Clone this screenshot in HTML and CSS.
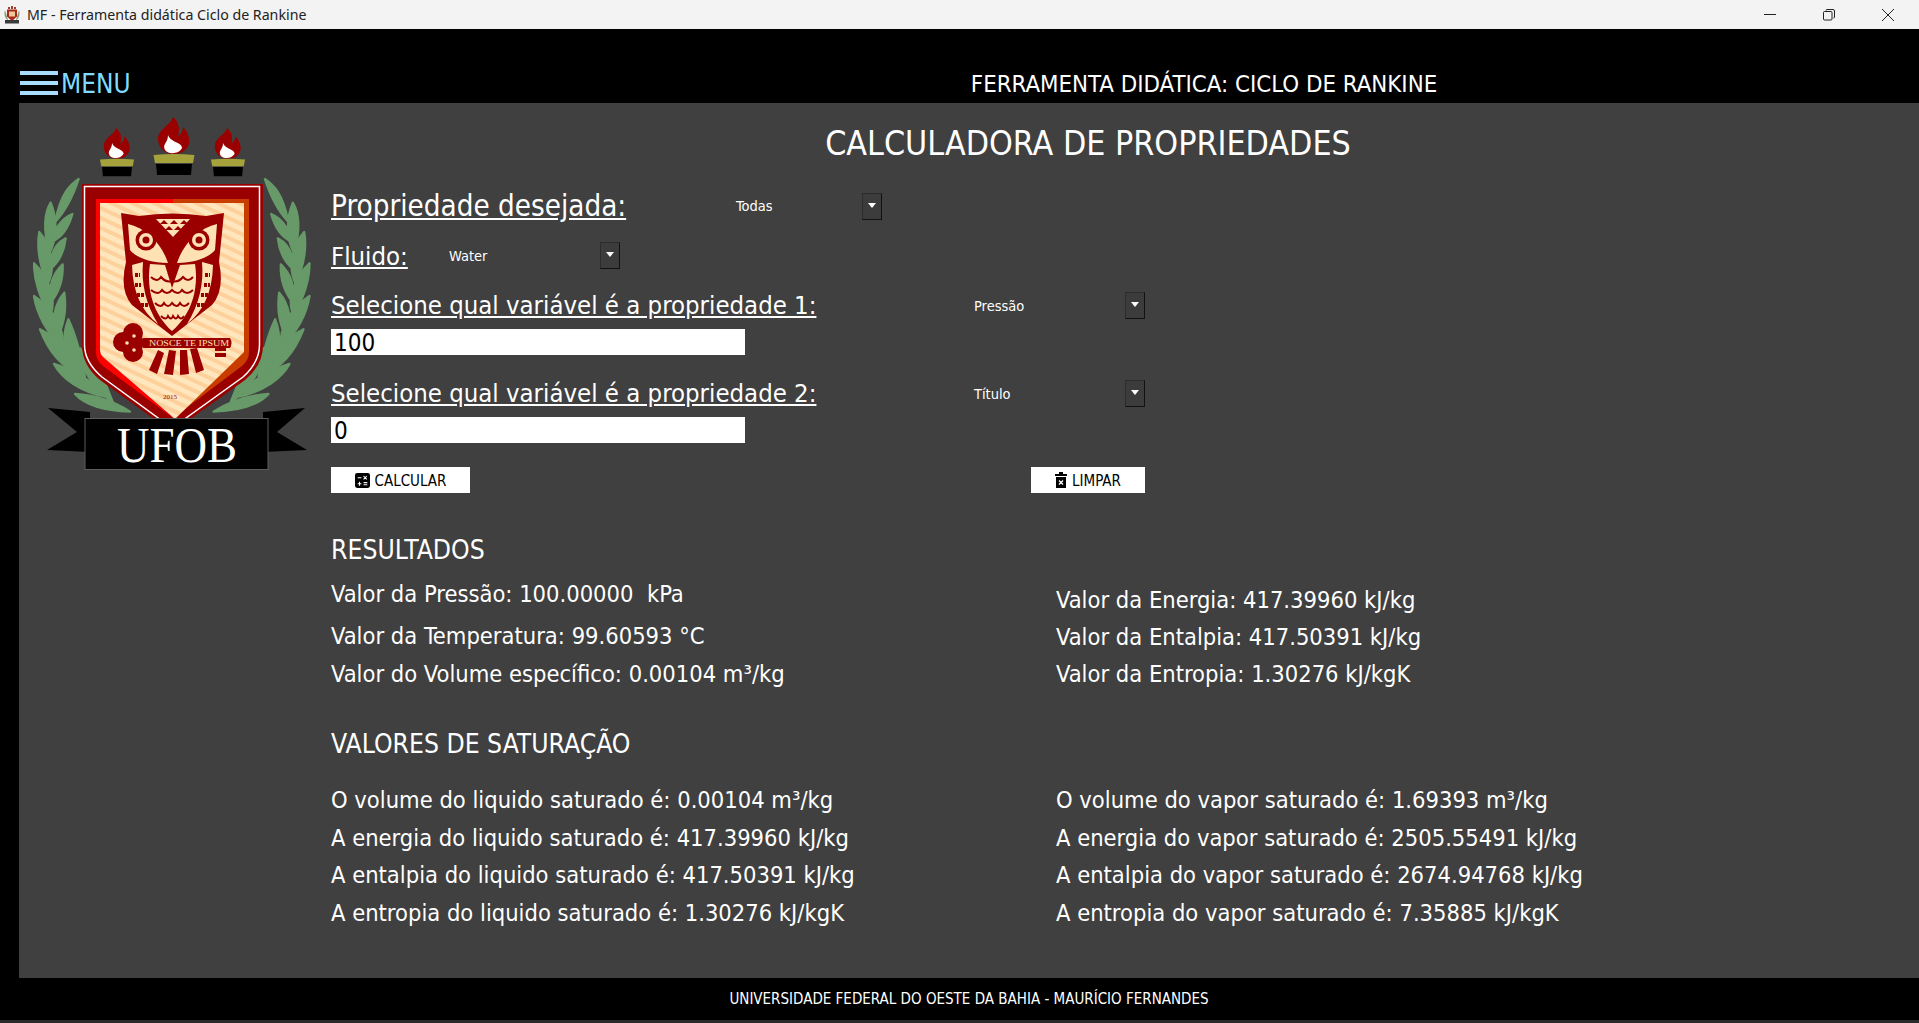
FILE: index.html
```html
<!DOCTYPE html>
<html lang="pt-BR">
<head>
    <meta charset="UTF-8">
    <title>MF - Ferramenta didática Ciclo de Rankine</title>
    <link rel="stylesheet" href="styles.css">
</head>
<body>
    <div class="titlebar">
        <svg class="app-icon" viewBox="0 0 18 18">
            <path d="M2 4Q0 10 5 15H13Q18 10 16 4L13 14H5Z" fill="#8a9a78"/>
            <path d="M4 3.500h10v7l-5 4.500-5-4.500z" fill="#a82818"/>
            <rect x="6" y="5.500" width="6" height="5" fill="#eec79a"/>
            <path d="M5 1h2v2H5zM8 0h2v3H8zM11 1h2v2h-2z" fill="#a04030"/>
            <rect x="2" y="14" width="14" height="3.500" fill="#3a3a3a"/>
        </svg>
        <span class="app-title">MF - Ferramenta didática Ciclo de Rankine</span>
        <div class="win-controls">
            <svg viewBox="0 0 12 12"><path d="M0 5.500h12" stroke="#222" fill="none"/></svg>
            <svg viewBox="0 0 12 12"><path d="M.5 3.500q0-1 1-1h6.500q1 0 1 1v6.500q0 1-1 1h-6.500q-1 0-1-1zM3 1.500q0-1 1-1h6q1.500 0 1.500 1.500v6q0 1-1 1" stroke="#222" fill="none"/></svg>
            <svg viewBox="0 0 12 12"><path d="M0 0l12 12M12 0l-12 12" stroke="#222" fill="none"/></svg>
        </div>
    </div>

    <header class="topbar">
        <div class="menu">
            <div class="burger"><i></i><i></i><i></i></div>
            <span>MENU</span>
        </div>
        <div class="app-heading">FERRAMENTA DIDÁTICA: CICLO DE RANKINE</div>
    </header>

    <div class="panel">
        <aside class="sidebar">
            <svg class="logo" viewBox="33 115 280 360">
                <defs>
                    <pattern id="stripes" width="9" height="9" patternUnits="userSpaceOnUse" patternTransform="rotate(25)">
                        <rect width="9" height="9" fill="#ffe6bd"/>
                        <rect width="9" height="4" fill="#fdd09c"/>
                    </pattern>
                    <g id="torch">
                        <path d="M0 37C-11 37-16 29-16 22-16 12-4 9-1 0 5 5 6 12 4 19 7 17 9 14 9 10 14 15 16 22 15 27 13 33 8 37 0 37Z" fill="#9a0000"/>
                        <path d="M-9 33C-12 27-6 26-6 18-3 26 8 25 8 31 5 37-5 38-9 33Z" fill="#fff"/>
                        <path d="M-20.500 38Q0 36 20.500 38L19 46H-19Z" fill="#a5a23c"/>
                        <path d="M-18 47H18L17 58H-17Z" fill="#000"/>
                    </g>
                    <g id="laurel" transform="translate(30 170) scale(.3333)" fill="#679a68" stroke="#679a68" stroke-width="7" stroke-linejoin="round">
                        <path d="M146 27C120 45 92 70 76 155 105 125 130 75 146 27Z"/>
                        <path d="M62 98C44 130 38 170 58 250 82 205 82 145 62 98Z"/>
                        <path d="M127 132C95 145 70 180 66 215 100 200 118 165 127 132Z"/>
                        <path d="M28 186C20 230 28 290 54 340 78 290 62 225 28 186Z"/>
                        <path d="M107 205C78 220 60 250 58 300 90 275 103 240 107 205Z"/>
                        <path d="M12 280C12 330 30 390 62 432 80 385 55 320 12 280Z"/>
                        <path d="M98 283C70 310 55 350 60 400 85 370 100 330 98 283Z"/>
                        <path d="M12 378C20 430 50 490 98 530 105 470 60 410 12 378Z"/>
                        <path d="M103 368C75 400 62 450 78 510 100 470 110 420 103 368Z"/>
                        <path d="M30 478C50 530 85 590 155 615 135 555 85 505 30 478Z"/>
                        <path d="M115 448C95 500 100 550 130 600L165 620C150 540 135 490 115 448Z"/>
                        <path d="M72 582C95 625 150 665 225 680 195 635 130 600 72 582Z"/>
                        <path d="M150 535C150 600 190 650 250 700L210 600Z"/>
                        <path d="M135 672C165 705 220 722 300 725 245 690 185 675 135 672Z"/>
                    </g>
                </defs>

                <use href="#torch" transform="translate(117 128) scale(.83)"/>
                <use href="#torch" transform="translate(174 117)"/>
                <use href="#torch" transform="translate(228 128) scale(.83)"/>

                <use href="#laurel"/>
                <use href="#laurel" transform="translate(343.500 0) scale(-1 1)"/>

                <!-- escudo -->
                <path d="M82 184H263V345Q263 365 245 380L172 432 100 380Q82 365 82 345Z" fill="#9a0000"/>
                <path d="M84.500 186.500H259.500V345Q259.500 362 243 377L172 428 102 377Q84.500 362 84.500 345Z" fill="none" stroke="#fff" stroke-width="1.500"/>
                <path d="M96 199H173V418L103 366Q96 360 96 352Z" fill="#ff0000"/>
                <path d="M249 199H173V418L242 366Q249 360 249 352Z" fill="#c83c00"/>
                <path d="M100 203H244V352L175 419 103 357Q100 354 100 350Z" fill="url(#stripes)"/>

                <!-- coruja -->
                <path d="M121 213L139 216Q172 211 206 216L224 213 219 262Q225 290 212 305L172 336 132 305Q119 290 126 262Z" fill="#9a0000"/>
                <path d="M128 224C146 228 162 244 168 263 150 263 135 257 130 250Z" fill="#ffe2b4"/>
                <path d="M217 224C199 228 183 244 177 263 195 263 210 257 215 250Z" fill="#ffe2b4"/>
                <circle cx="146" cy="240" r="10.500" fill="#9a0000"/>
                <circle cx="146" cy="240" r="7" fill="#ffe2b4"/>
                <circle cx="146" cy="240" r="3.500" fill="#9a0000"/>
                <circle cx="199" cy="240" r="10.500" fill="#9a0000"/>
                <circle cx="199" cy="240" r="7" fill="#ffe2b4"/>
                <circle cx="199" cy="240" r="3.500" fill="#9a0000"/>
                <path d="M156 219H190L173 237Z" fill="#ffe2b4"/>
                <path d="M160 224L164 220 168 224ZM170 224L174 220 178 224ZM180 224L184 220 188 224ZM165 230L169 226 173 230ZM174 230L178 226 182 230Z" fill="#9a0000"/>
                <path d="M150 264L165 265 172 288 180 265 195 264C199 290 191 315 172 331 154 315 146 290 150 264Z" fill="#ffe2b4"/>
                <path d="M151 277q6 6 10 0q5 6 11 4q6 2 11-4q5 6 10 0M151 290q7 6 11 0q5 6 10 0q6 6 10 0q5 6 11 0M155 303q6 6 9 0q4 6 8 0q5 6 8 0q4 6 9 0M161 316q5 5 7 0q3 5 5 0q3 5 5 0q3 5 6 0" fill="none" stroke="#9a0000" stroke-width="2"/>
                <path d="M132 265L143 262Q140 295 158 324 133 305 132 265ZM213 265L202 262Q205 295 187 324 212 305 213 265Z" fill="#ffe2b4"/>
                <path d="M135 275h5M135 285h6M137 295h7M141 305h7M205 275h5M204 285h6M201 295h7M197 305h7" stroke="#9a0000" stroke-width="4" stroke-dasharray="3 1"/>

                <!-- chave -->
                <circle cx="123" cy="342" r="10" fill="#9a0000"/>
                <circle cx="133" cy="333" r="10" fill="#9a0000"/>
                <circle cx="133" cy="352" r="10" fill="#9a0000"/>
                <circle cx="136" cy="343" r="8" fill="#9a0000"/>
                <circle cx="127" cy="343" r="1.800" fill="#ffe2b4"/>
                <circle cx="134" cy="336" r="1.800" fill="#ffe2b4"/>
                <circle cx="134" cy="350" r="1.800" fill="#ffe2b4"/>
                <path d="M143 338H230Q233 343 230 348H143Z" fill="#9a0000"/>
                <text class="key-text" x="149" y="346" textLength="80" lengthAdjust="spacingAndGlyphs">NOSCE TE IPSUM</text>
                <path d="M215 348h11v3h-11zM215 353h11v4h-11z" fill="#9a0000"/>
                <path d="M158 350l6 3-7 21-8-4zM169 350l7 1-3 24-9-1zM180 350l7 0 2 24-9 1zM190 349l7-1 7 22-8 3z" fill="#9a0000"/>
                <text class="year-text" x="163" y="399">2015</text>

                <!-- faixa -->
                <path d="M48 408L90 412V452L47 450 77 432ZM305 408L263 412V452L307 450 277 432Z" fill="#000"/>
                <rect x="85" y="418.500" width="183" height="51" fill="#000" stroke="#5c5c5c"/>
                <text class="ufob-text" x="117" y="462" textLength="120" lengthAdjust="spacingAndGlyphs">UFOB</text>
            </svg>
        </aside>

        <main class="content">
            <h1>CALCULADORA DE PROPRIEDADES</h1>

            <div class="row row-1">
                <label class="big-label">Propriedade desejada:</label>
                <div class="combo combo-todas"><span>Todas</span><button class="arrow"></button></div>
            </div>
            <div class="row row-2">
                <label class="field-label">Fluido:</label>
                <div class="combo combo-water"><span>Water</span><button class="arrow"></button></div>
            </div>
            <div class="row row-3">
                <label class="field-label">Selecione qual variável é a propriedade 1:</label>
                <div class="combo combo-var"><span>Pressão</span><button class="arrow"></button></div>
            </div>
            <input class="value-input" type="text" value="100">
            <div class="row row-4">
                <label class="field-label">Selecione qual variável é a propriedade 2:</label>
                <div class="combo combo-var"><span>Título</span><button class="arrow"></button></div>
            </div>
            <input class="value-input" type="text" value="0">

            <div class="actions">
                <button class="action action-calc">
                    <svg viewBox="0 0 14 14"><rect width="14" height="14" rx="2" fill="#000"/><path d="M2.500 4.500h3.500M8 3l3 3M11 3l-3 3M4.200 8.200v3.600M2.500 10h3.500M8 9h3.500M8 11h3.500" stroke="#fff" fill="none"/></svg>
                    <span>CALCULAR</span>
                </button>
                <button class="action action-clear">
                    <svg viewBox="0 0 12 16"><path d="M0 2h4V0h4v2h4v2H0zM1 5h10v11H1z" fill="#000"/><path d="M4 8.500l4 4M8 8.500l-4 4" stroke="#fff" stroke-width="1.400"/></svg>
                    <span>LIMPAR</span>
                </button>
            </div>

            <h2 class="results-title">RESULTADOS</h2>
            <div class="results">
                <div class="col col-left">
                    <div class="line">Valor da Pressão: 100.00000&nbsp; kPa</div>
                    <div class="line line-temp">Valor da Temperatura: 99.60593 °C</div>
                    <div class="line line-next">Valor do Volume específico: 0.00104 m³/kg</div>
                </div>
                <div class="col col-right">
                    <div class="line">Valor da Energia: 417.39960 kJ/kg</div>
                    <div class="line line-next">Valor da Entalpia: 417.50391 kJ/kg</div>
                    <div class="line line-next">Valor da Entropia: 1.30276 kJ/kgK</div>
                </div>
            </div>

            <h2 class="sat-title">VALORES DE SATURAÇÃO</h2>
            <div class="sat-grid">
                <div class="line">O volume do liquido saturado é: 0.00104 m³/kg</div>
                <div class="line">O volume do vapor saturado é: 1.69393 m³/kg</div>
                <div class="line">A energia do liquido saturado é: 417.39960 kJ/kg</div>
                <div class="line">A energia do vapor saturado é: 2505.55491 kJ/kg</div>
                <div class="line">A entalpia do liquido saturado é: 417.50391 kJ/kg</div>
                <div class="line">A entalpia do vapor saturado é: 2674.94768 kJ/kg</div>
                <div class="line">A entropia do liquido saturado é: 1.30276 kJ/kgK</div>
                <div class="line">A entropia do vapor saturado é: 7.35885 kJ/kgK</div>
            </div>
        </main>
    </div>

    <footer class="footer">UNIVERSIDADE FEDERAL DO OESTE DA BAHIA - MAURÍCIO FERNANDES</footer>
    <div class="bottom-edge"></div>
</body>
</html>
```

FILE: styles.css
```css
* {
    box-sizing: border-box;
}
html, body {
    height: 100%;
}
body {
    margin: 0;
    background-color: #000;
    color: #fff;
    font-family: "DejaVu Sans", sans-serif;
    font-stretch: condensed;
    display: flex;
    flex-direction: column;
    overflow: hidden;
}

/* barra do windows */
.titlebar {
    height: 29px;
    flex: none;
    background-color: #f3f3f3;
    color: #222;
    display: flex;
    align-items: center;
    padding-left: 3px;
    font-family: "Noto Sans", sans-serif;
    font-stretch: normal;
    font-size: 14.200px;
}
.app-icon {
    width: 18px;
    height: 18px;
    margin-right: 6px;
}
.app-title {
    flex-grow: 1;
}
.win-controls {
    display: flex;
    gap: 47px;
    padding-right: 25px;
}
.win-controls svg {
    width: 12px;
    height: 12px;
}

/* topo */
.topbar {
    height: 74px;
    flex: none;
    display: flex;
    align-items: flex-end;
    padding-left: 20px;
    padding-bottom: 5px;
}
.menu {
    display: flex;
    align-items: center;
    gap: 3px;
    width: 754px;
    color: #7fdcff;
    font-size: 26px;
    height: 28px;
}
.burger {
    width: 38px;
    height: 24px;
    margin-bottom: 2px;
    display: flex;
    flex-direction: column;
    justify-content: space-between;
}
.burger i {
    display: block;
    height: 4px;
    background-color: #a8dcff;
}
.app-heading {
    width: 860px;
    text-align: center;
    font-size: 23.800px;
    line-height: 28px;
}

/* painel central */
.panel {
    height: 875px;
    flex: none;
    margin-left: 19px;
    background-color: #404040;
    display: flex;
}
.sidebar {
    width: 312px;
    flex: none;
    padding: 12px 0 0 14px;
}
.logo {
    display: block;
    width: 280px;
    height: 360px;
}
.key-text {
    font-family: "Liberation Serif", serif;
    font-size: 8px;
    fill: #ffe2b4;
}
.year-text {
    font-family: "Liberation Serif", serif;
    font-size: 7px;
    fill: #9a0000;
}
.ufob-text {
    font-family: "Liberation Serif", serif;
    font-stretch: normal;
    font-size: 50px;
    fill: #fff;
}

.content {
    flex-grow: 1;
    padding-right: 74px;
}
h1 {
    margin: 23px 0 0;
    height: 36px;
    line-height: 36px;
    font-size: 33.700px;
    font-weight: normal;
    text-align: center;
}
.row {
    display: flex;
    align-items: center;
    height: 28px;
}
.row-1 {
    height: 30px;
    margin-top: 29px;
}
.row-2 {
    margin-top: 20px;
}
.row-3 {
    margin-top: 22px;
}
.row-4 {
    margin-top: 24px;
}
.big-label {
    font-size: 29.300px;
    text-decoration: underline;
    width: 389px;
    white-space: nowrap;
}
.field-label {
    font-size: 25.500px;
    text-decoration: underline;
    width: 627px;
    white-space: nowrap;
}
.row-2 .field-label {
    width: 102px;
    padding-top: 1px;
}
.combo {
    display: flex;
    align-items: center;
    justify-content: space-between;
    padding-left: 16px;
    font-size: 14.500px;
    height: 27px;
}
.combo-todas {
    width: 162px;
}
.combo-water, .combo-var {
    width: 187px;
}
.combo-water span, .combo-var span {
    padding-top: 2px;
}
.arrow {
    width: 20px;
    height: 27px;
    padding: 0;
    background-color: #3c3c3c;
    border: 1px solid #2c2c2c;
    border-right-color: #111;
    border-bottom-color: #111;
    position: relative;
}
.arrow::after {
    content: "";
    position: absolute;
    left: 5px;
    top: 9px;
    border-left: 4px solid transparent;
    border-right: 4px solid transparent;
    border-top: 5px solid #fff;
}
.value-input {
    display: block;
    width: 414px;
    height: 26px;
    margin-top: 10px;
    border: none;
    padding: 2px 3px 0;
    background-color: #fff;
    color: #000;
    font-family: inherit;
    font-stretch: condensed;
    font-size: 24px;
    outline: none;
}
.actions {
    display: flex;
    justify-content: space-between;
    width: 814px;
    margin-top: 24px;
}
.action {
    height: 26px;
    display: flex;
    align-items: center;
    justify-content: center;
    gap: 5px;
    background-color: #fff;
    color: #000;
    border: none;
    font-family: inherit;
    font-stretch: condensed;
    font-size: 15px;
    padding: 0;
}
.action span {
    padding-top: 2px;
}
.action svg {
    height: 15px;
    width: 15px;
}
.action-calc {
    width: 139px;
}
.action-clear {
    width: 114px;
}
.action-clear svg {
    width: 12px;
    height: 16px;
}
h2 {
    margin: 0;
    font-weight: normal;
    font-size: 26.300px;
    height: 30px;
    line-height: 30px;
}
.results-title {
    margin-top: 42px;
}
.line {
    height: 30px;
    line-height: 30px;
    font-size: 23.500px;
    white-space: nowrap;
}
.results {
    display: grid;
    grid-template-columns: 725px 725px;
}
.col-left {
    padding-top: 14px;
}
.col-right {
    padding-top: 20px;
}
.line-temp {
    margin-top: 12px;
}
.line-next {
    margin-top: 8px;
}
.col-right .line-next {
    margin-top: 7px;
}
.sat-title {
    margin-top: 40px;
}
.sat-grid {
    display: grid;
    grid-template-columns: 725px 725px;
    row-gap: 7.500px;
    margin-top: 26px;
}

.footer {
    height: 42px;
    flex: none;
    padding-left: 19px;
    text-align: center;
    line-height: 42px;
    font-size: 15px;
}
.bottom-edge {
    flex-grow: 1;
    background-color: #2a2a2a;
}
```
